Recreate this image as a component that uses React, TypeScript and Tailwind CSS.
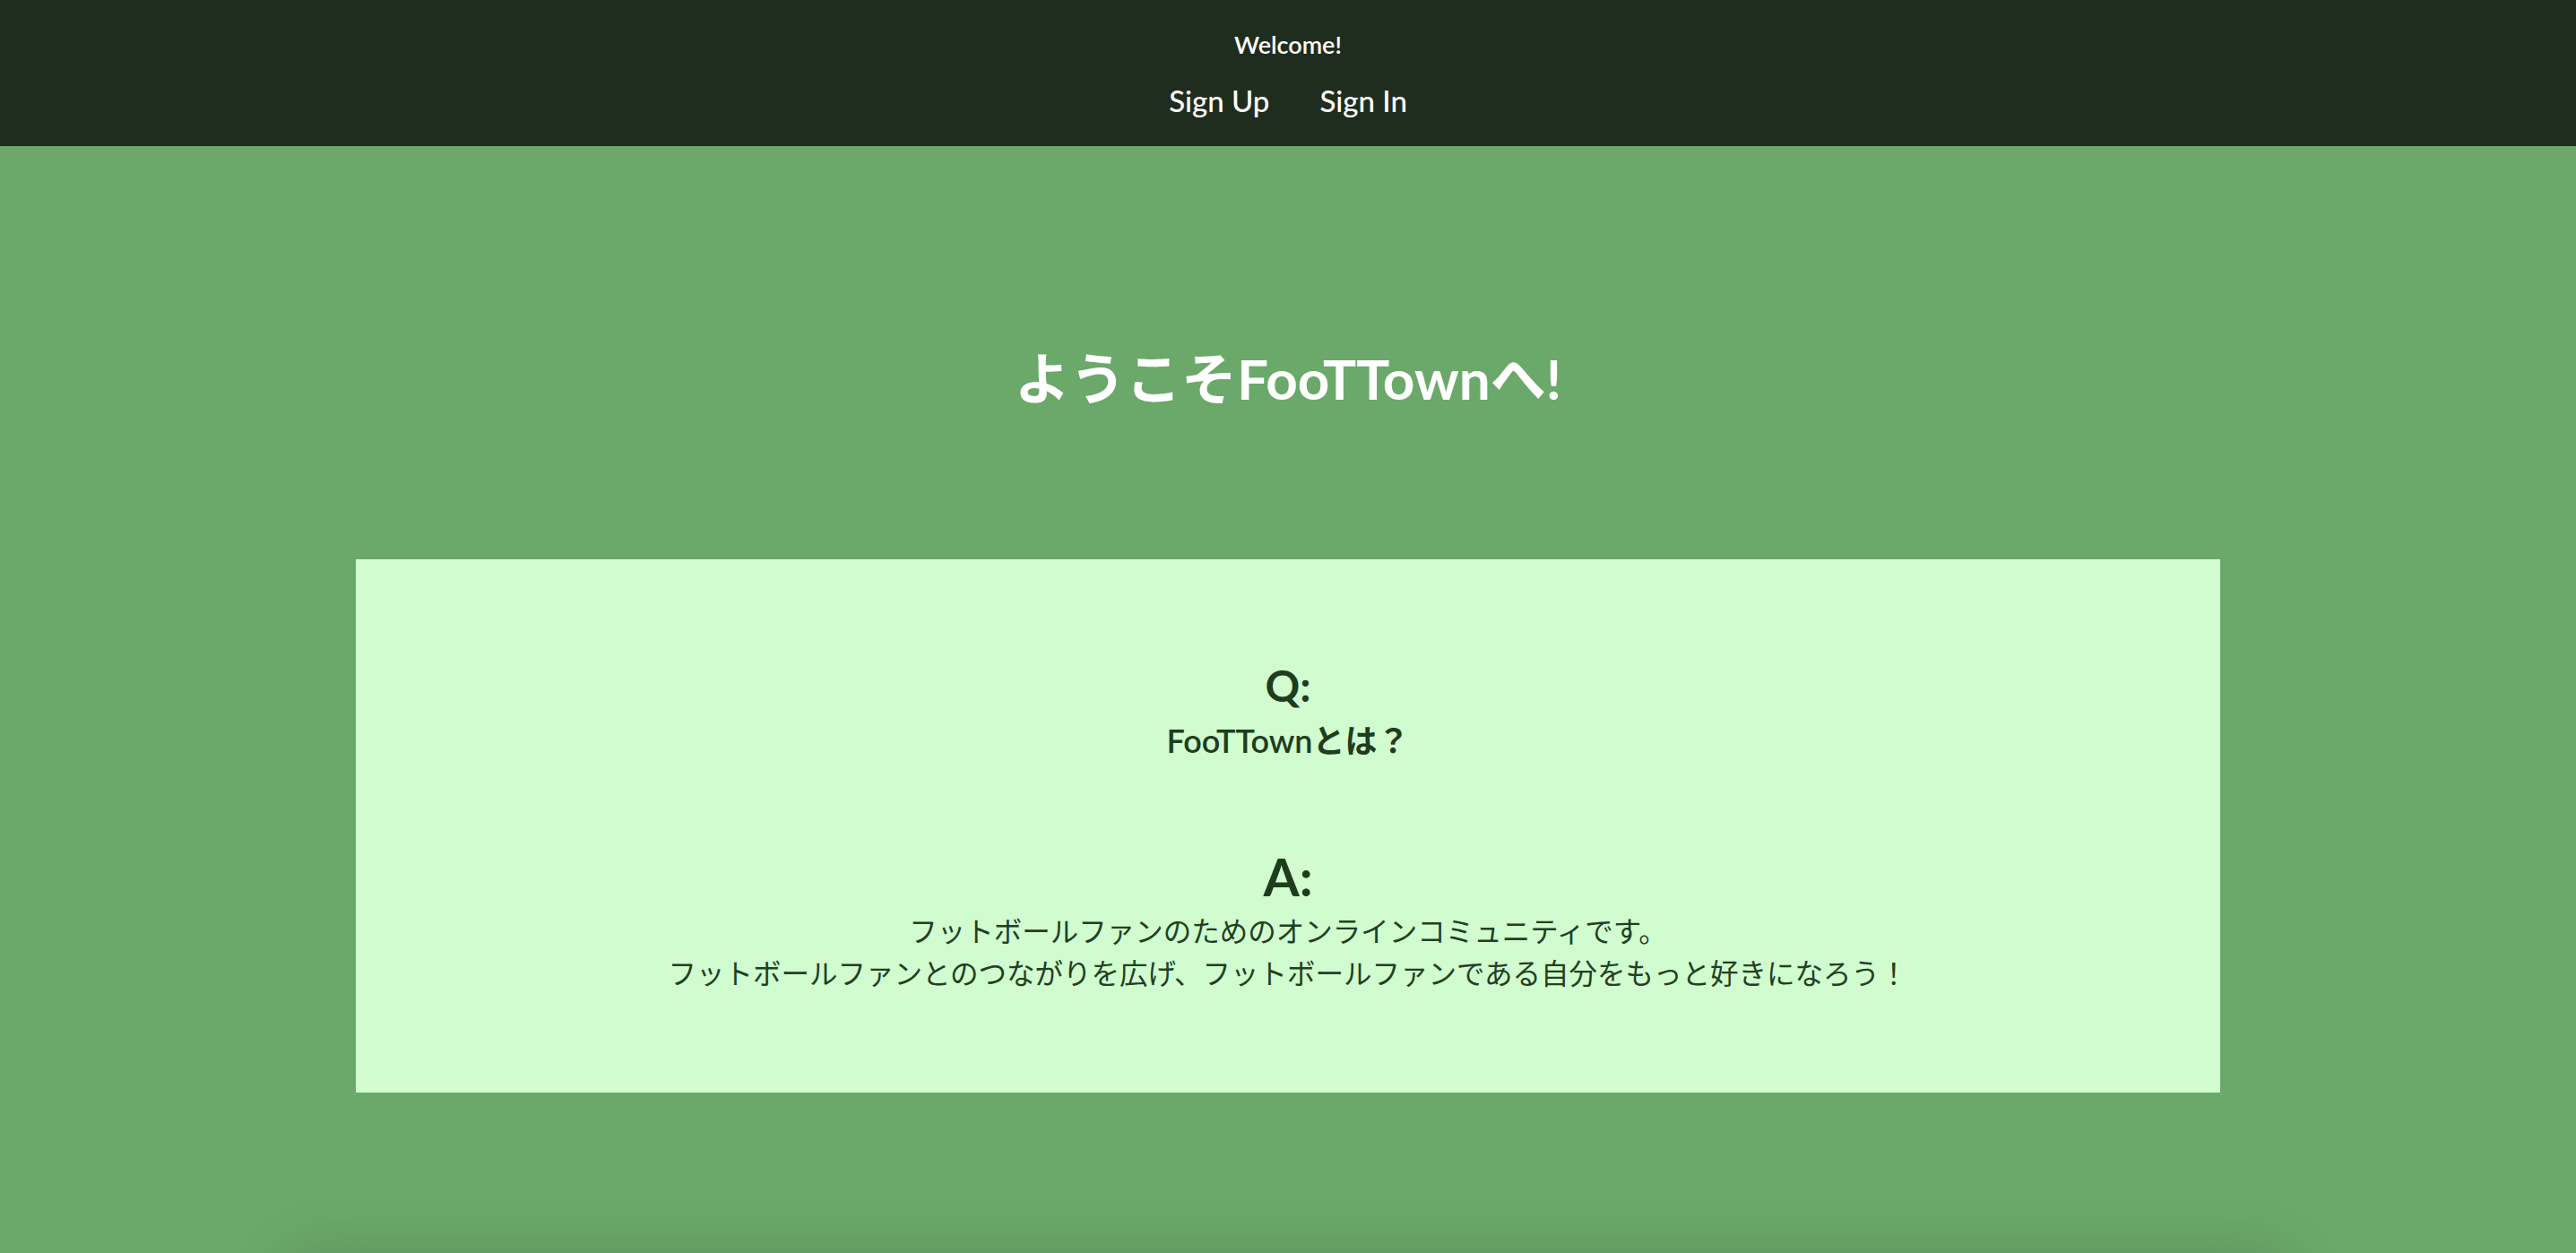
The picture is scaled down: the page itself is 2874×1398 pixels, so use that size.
import React from "react";

const font = { fontFamily: "Lato, 'Noto Sans CJK JP', sans-serif" };

export default function App() {
  return (
    <div className="min-h-screen w-full overflow-hidden bg-[#6aa969]" style={font}>
      <header className="flex h-[163px] flex-col items-center bg-[#1f2d1e] text-white">
        <div className="mt-[33px] text-[27px] font-semibold leading-[34px]">Welcome!</div>
        <nav className="mt-[25px] flex gap-[56px] text-[33px] font-medium leading-[40px]">
          <a className="cursor-pointer">Sign Up</a>
          <a className="cursor-pointer">Sign In</a>
        </nav>
      </header>

      <h1 className="mt-[223px] text-center text-[62px] font-bold leading-[72px] text-white">
        ようこそFooTTownへ!
      </h1>

      <section className="mx-auto mt-[166px] flex w-[2080px] flex-col items-center bg-[#d0fcd0] pt-[113px] pb-[111px] text-[#1f3d1d]">
        <h2 className="text-[48px] font-bold leading-[56px]">Q:</h2>
        <p className="mt-[8px] text-[36px] font-semibold leading-[50px]">FooTTownとは？</p>
        <h2 className="mt-[93px] text-[58px] font-bold leading-[68px]">A:</h2>
        <div className="mt-[2px] text-center text-[31.5px] leading-[47px] text-[#22401f]" style={{ fontFamily: "'Noto Sans CJK JP', sans-serif" }}>
          <p>フットボールファンのためのオンラインコミュニティです。</p>
          <p>フットボールファンとのつながりを広げ、フットボールファンである自分をもっと好きになろう！</p>
        </div>
      </section>

      <div className="mx-auto mt-[188px] h-[300px] w-[2220px] bg-[#6aa969] shadow-[0_0_70px_rgba(0,0,0,0.18)]" />
    </div>
  );
}
